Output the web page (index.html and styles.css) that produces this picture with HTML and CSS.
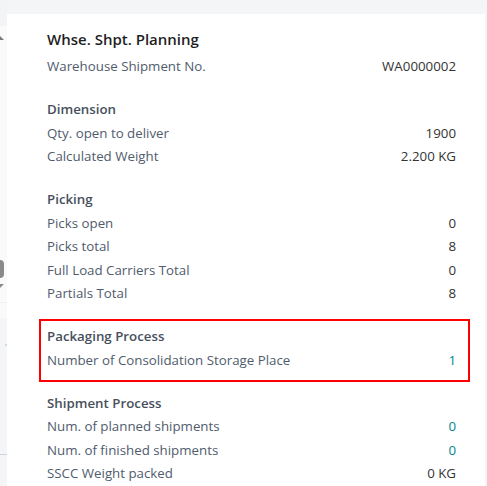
FILE: index.html
```html
<!DOCTYPE html>
<html>
<head>
<meta charset="utf-8">
<link rel="stylesheet" href="styles.css">
</head>
<body>
<div class="page">
  <div class="side">
    <div class="side-top"></div>
    <div class="side-body">
      <div class="tri tri-up"></div>
      <div class="blob"></div>
      <div class="tri tri-down"></div>
      <div class="side-line"></div>
      <div class="side-lower">
        <div class="dot"></div>
        <div class="side-line2"></div>
      </div>
    </div>
  </div>
  <div class="main">
    <div class="topband"></div>
    <div class="panel">
      <div class="title">Whse. Shpt. Planning</div>
      <div class="row"><span class="label">Warehouse Shipment No.</span><span class="value">WA0000002</span></div>

      <div class="group">
        <div class="ghead">Dimension</div>
        <div class="row"><span class="label">Qty. open to deliver</span><span class="value">1900</span></div>
        <div class="row"><span class="label">Calculated Weight</span><span class="value">2.200 KG</span></div>
      </div>

      <div class="group">
        <div class="ghead">Picking</div>
        <div class="row"><span class="label">Picks open</span><span class="value">0</span></div>
        <div class="row"><span class="label">Picks total</span><span class="value">8</span></div>
        <div class="row"><span class="label">Full Load Carriers Total</span><span class="value">0</span></div>
        <div class="row"><span class="label">Partials Total</span><span class="value">8</span></div>
      </div>

      <div class="group highlighted">
        <div class="ghead">Packaging Process</div>
        <div class="row"><span class="label">Number of Consolidation Storage Place</span><span class="value link">1</span></div>
      </div>

      <div class="group">
        <div class="ghead">Shipment Process</div>
        <div class="row"><span class="label">Num. of planned shipments</span><span class="value link">0</span></div>
        <div class="row"><span class="label">Num. of finished shipments</span><span class="value link">0</span></div>
        <div class="row"><span class="label">SSCC Weight packed</span><span class="value">0 KG</span></div>
      </div>
    </div>
  </div>
</div>
</body>
</html>
```

FILE: styles.css
```css
html, body {
  margin: 0;
  padding: 0;
}
body {
  width: 487px;
  height: 486px;
  overflow: hidden;
  background: #f4f5f7;
  font-family: "Open Sans", "Noto Sans", sans-serif;
  font-size: 13.3px;
}
.page {
  display: flex;
  height: 486px;
}
.side {
  width: 7px;
  flex: none;
  display: flex;
  flex-direction: column;
}
.side-top {
  height: 26px;
  background: #f3f4f6;
}
.side-body {
  flex: 1;
  background: #fafafa;
  position: relative;
}
.tri {
  position: absolute;
  left: 0;
  width: 0;
  height: 0;
}
.tri-up {
  top: 10px;
  border-bottom: 4px solid #7a7a7a;
  border-right: 4px solid transparent;
}
.blob {
  position: absolute;
  top: 234px;
  left: -4px;
  width: 8px;
  height: 18px;
  border-radius: 4px;
  background: #8a8a8a;
}
.tri-down {
  position: absolute;
  top: 258px;
  border-top: 4px solid #8a8a8a;
  border-right: 4px solid transparent;
}
.side-line {
  position: absolute;
  top: 276px;
  left: 0;
  right: 0;
  height: 1px;
  background: #eceef1;
}
.side-lower {
  position: absolute;
  top: 292px;
  left: 0;
  right: 0;
  bottom: 0;
  background: #f4f5f7;
}
.dot {
  position: absolute;
  top: 26px;
  left: 5px;
  width: 2px;
  height: 2px;
  background: #d6d9de;
}
.side-line2 {
  position: absolute;
  top: 136px;
  left: 0;
  right: 0;
  height: 1px;
  background: #d0d3d8;
}
.main {
  flex: 1;
  display: flex;
  flex-direction: column;
}
.topband {
  height: 14px;
  flex: none;
  background: #f4f5f7;
}
.panel {
  flex: 1;
  background: #ffffff;
  border-right: 2px solid #f3f4f6;
  padding: 11px 29px 0 40px;
}
.title {
  font-size: 15px;
  font-weight: 600;
  line-height: 28px;
  margin-bottom: 2px;
  color: #1f1f1f;
}
.row {
  display: flex;
  justify-content: space-between;
  line-height: 23.5px;
  height: 23.5px;
}
.label {
  color: #505c6d;
}
.value {
  color: #333333;
}
.value.link {
  color: #00868f;
}
.group {
  margin-top: 19.5px;
}
.ghead {
  font-weight: 600;
  line-height: 23.5px;
  color: #474f5c;
}
.highlighted {
  position: relative;
}
.highlighted::after {
  content: "";
  position: absolute;
  top: -6px;
  bottom: -10px;
  left: -8px;
  right: -14px;
  border: 2px solid #ff0000;
}
```
